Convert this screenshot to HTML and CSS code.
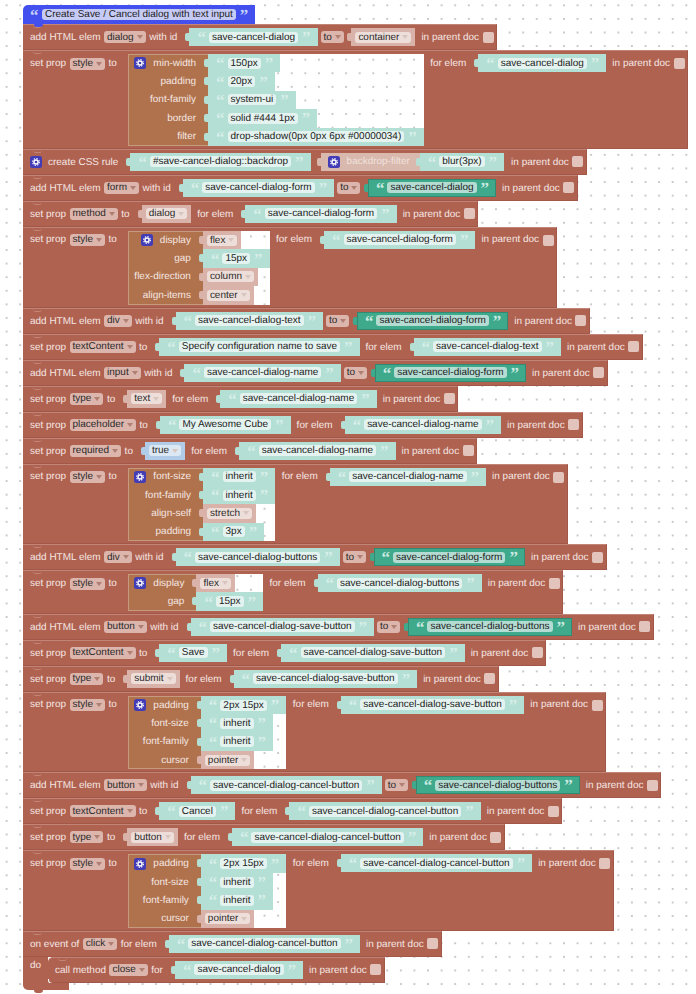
FILE: index.html
```html
<!DOCTYPE html>
<html lang="en">
<head>
  <meta charset="UTF-8">
  <title>Blocks</title>
  <link rel="stylesheet" href="styles.css">
</head>
<body>
  <svg class="defs" width="0" height="0">
    <symbol id="gear" viewBox="0 0 24 24">
      <rect width="24" height="24" rx="5" fill="#423cb6"/>
      <circle cx="12" cy="12" r="5.500" fill="#fff"/>
      <circle cx="12" cy="12" r="6.800" fill="none" stroke="#fff" stroke-width="2.200" stroke-dasharray="2.700 2.640"/>
      <circle cx="12" cy="12" r="2.600" fill="#423cb6"/>
    </symbol>
  </svg>

  <div class="stack">
    <div class="hat">
      <span class="q">“</span><span class="fld">Create Save / Cancel dialog with text input</span><span class="q">”</span>
    </div>

    <div class="row">
      <span>add HTML elem</span><span class="drop">dialog<i></i></span><span>with id</span>
      <span class="str"><span class="q">“</span><span class="fld">save-cancel-dialog</span><span class="q">”</span></span>
      <span class="drop">to<i></i></span>
      <span class="menu"><span class="drop">container<i></i></span></span>
      <span>in parent doc</span><span class="check"></span>
    </div>

    <div class="row tall">
      <span>set prop</span><span class="drop">style<i></i></span><span>to</span>
      <div class="mixin">
        <div class="keys">
          <div class="key"><svg class="gear"><use href="#gear"/></svg><span>min-width</span></div>
          <div class="key">padding</div>
          <div class="key">font-family</div>
          <div class="key">border</div>
          <div class="key">filter</div>
        </div>
        <div class="vals">
          <span class="str"><span class="q">“</span><span class="fld">150px</span><span class="q">”</span></span>
          <span class="str"><span class="q">“</span><span class="fld">20px</span><span class="q">”</span></span>
          <span class="str"><span class="q">“</span><span class="fld">system-ui</span><span class="q">”</span></span>
          <span class="str"><span class="q">“</span><span class="fld">solid #444 1px</span><span class="q">”</span></span>
          <span class="str"><span class="q">“</span><span class="fld">drop-shadow(0px 0px 6px #00000034)</span><span class="q">”</span></span>
        </div>
      </div>
      <span>for elem</span>
      <span class="str"><span class="q">“</span><span class="fld">save-cancel-dialog</span><span class="q">”</span></span>
      <span>in parent doc</span><span class="check"></span>
    </div>

    <div class="row">
      <svg class="gear"><use href="#gear"/></svg><span>create CSS rule</span>
      <span class="str"><span class="q">“</span><span class="fld">#save-cancel-dialog::backdrop</span><span class="q">”</span></span>
      <span class="css">
        <svg class="gear"><use href="#gear"/></svg><span class="css-name">backdrop-filter</span>
        <span class="str"><span class="q">“</span><span class="fld">blur(3px)</span><span class="q">”</span></span>
      </span>
      <span>in parent doc</span><span class="check"></span>
    </div>

    <div class="row">
      <span>add HTML elem</span><span class="drop">form<i></i></span><span>with id</span>
      <span class="str"><span class="q">“</span><span class="fld">save-cancel-dialog-form</span><span class="q">”</span></span>
      <span class="drop">to<i></i></span>
      <span class="str dark"><span class="q">“</span><span class="fld">save-cancel-dialog</span><span class="q">”</span></span>
      <span>in parent doc</span><span class="check"></span>
    </div>

    <div class="row">
      <span>set prop</span><span class="drop">method<i></i></span><span>to</span>
      <span class="menu"><span class="drop">dialog<i></i></span></span>
      <span>for elem</span>
      <span class="str"><span class="q">“</span><span class="fld">save-cancel-dialog-form</span><span class="q">”</span></span>
      <span>in parent doc</span><span class="check"></span>
    </div>

    <div class="row tall">
      <span>set prop</span><span class="drop">style<i></i></span><span>to</span>
      <div class="mixin">
        <div class="keys">
          <div class="key"><svg class="gear"><use href="#gear"/></svg><span>display</span></div>
          <div class="key">gap</div>
          <div class="key">flex-direction</div>
          <div class="key">align-items</div>
        </div>
        <div class="vals">
          <span class="menu"><span class="drop">flex<i></i></span></span>
          <span class="str"><span class="q">“</span><span class="fld">15px</span><span class="q">”</span></span>
          <span class="menu"><span class="drop">column<i></i></span></span>
          <span class="menu"><span class="drop">center<i></i></span></span>
        </div>
      </div>
      <span>for elem</span>
      <span class="str"><span class="q">“</span><span class="fld">save-cancel-dialog-form</span><span class="q">”</span></span>
      <span>in parent doc</span><span class="check"></span>
    </div>

    <div class="row">
      <span>add HTML elem</span><span class="drop">div<i></i></span><span>with id</span>
      <span class="str"><span class="q">“</span><span class="fld">save-cancel-dialog-text</span><span class="q">”</span></span>
      <span class="drop">to<i></i></span>
      <span class="str dark"><span class="q">“</span><span class="fld">save-cancel-dialog-form</span><span class="q">”</span></span>
      <span>in parent doc</span><span class="check"></span>
    </div>

    <div class="row">
      <span>set prop</span><span class="drop">textContent<i></i></span><span>to</span>
      <span class="str"><span class="q">“</span><span class="fld">Specify configuration name to save</span><span class="q">”</span></span>
      <span>for elem</span>
      <span class="str"><span class="q">“</span><span class="fld">save-cancel-dialog-text</span><span class="q">”</span></span>
      <span>in parent doc</span><span class="check"></span>
    </div>

    <div class="row">
      <span>add HTML elem</span><span class="drop">input<i></i></span><span>with id</span>
      <span class="str"><span class="q">“</span><span class="fld">save-cancel-dialog-name</span><span class="q">”</span></span>
      <span class="drop">to<i></i></span>
      <span class="str dark"><span class="q">“</span><span class="fld">save-cancel-dialog-form</span><span class="q">”</span></span>
      <span>in parent doc</span><span class="check"></span>
    </div>

    <div class="row">
      <span>set prop</span><span class="drop">type<i></i></span><span>to</span>
      <span class="menu"><span class="drop">text<i></i></span></span>
      <span>for elem</span>
      <span class="str"><span class="q">“</span><span class="fld">save-cancel-dialog-name</span><span class="q">”</span></span>
      <span>in parent doc</span><span class="check"></span>
    </div>

    <div class="row">
      <span>set prop</span><span class="drop">placeholder<i></i></span><span>to</span>
      <span class="str"><span class="q">“</span><span class="fld">My Awesome Cube</span><span class="q">”</span></span>
      <span>for elem</span>
      <span class="str"><span class="q">“</span><span class="fld">save-cancel-dialog-name</span><span class="q">”</span></span>
      <span>in parent doc</span><span class="check"></span>
    </div>

    <div class="row">
      <span>set prop</span><span class="drop">required<i></i></span><span>to</span>
      <span class="menu bool"><span class="drop">true<i></i></span></span>
      <span>for elem</span>
      <span class="str"><span class="q">“</span><span class="fld">save-cancel-dialog-name</span><span class="q">”</span></span>
      <span>in parent doc</span><span class="check"></span>
    </div>

    <div class="row tall">
      <span>set prop</span><span class="drop">style<i></i></span><span>to</span>
      <div class="mixin">
        <div class="keys">
          <div class="key"><svg class="gear"><use href="#gear"/></svg><span>font-size</span></div>
          <div class="key">font-family</div>
          <div class="key">align-self</div>
          <div class="key">padding</div>
        </div>
        <div class="vals">
          <span class="str"><span class="q">“</span><span class="fld">inherit</span><span class="q">”</span></span>
          <span class="str"><span class="q">“</span><span class="fld">inherit</span><span class="q">”</span></span>
          <span class="menu"><span class="drop">stretch<i></i></span></span>
          <span class="str"><span class="q">“</span><span class="fld">3px</span><span class="q">”</span></span>
        </div>
      </div>
      <span>for elem</span>
      <span class="str"><span class="q">“</span><span class="fld">save-cancel-dialog-name</span><span class="q">”</span></span>
      <span>in parent doc</span><span class="check"></span>
    </div>

    <div class="row">
      <span>add HTML elem</span><span class="drop">div<i></i></span><span>with id</span>
      <span class="str"><span class="q">“</span><span class="fld">save-cancel-dialog-buttons</span><span class="q">”</span></span>
      <span class="drop">to<i></i></span>
      <span class="str dark"><span class="q">“</span><span class="fld">save-cancel-dialog-form</span><span class="q">”</span></span>
      <span>in parent doc</span><span class="check"></span>
    </div>

    <div class="row tall">
      <span>set prop</span><span class="drop">style<i></i></span><span>to</span>
      <div class="mixin">
        <div class="keys">
          <div class="key"><svg class="gear"><use href="#gear"/></svg><span>display</span></div>
          <div class="key">gap</div>
        </div>
        <div class="vals">
          <span class="menu"><span class="drop">flex<i></i></span></span>
          <span class="str"><span class="q">“</span><span class="fld">15px</span><span class="q">”</span></span>
        </div>
      </div>
      <span>for elem</span>
      <span class="str"><span class="q">“</span><span class="fld">save-cancel-dialog-buttons</span><span class="q">”</span></span>
      <span>in parent doc</span><span class="check"></span>
    </div>

    <div class="row">
      <span>add HTML elem</span><span class="drop">button<i></i></span><span>with id</span>
      <span class="str"><span class="q">“</span><span class="fld">save-cancel-dialog-save-button</span><span class="q">”</span></span>
      <span class="drop">to<i></i></span>
      <span class="str dark"><span class="q">“</span><span class="fld">save-cancel-dialog-buttons</span><span class="q">”</span></span>
      <span>in parent doc</span><span class="check"></span>
    </div>

    <div class="row">
      <span>set prop</span><span class="drop">textContent<i></i></span><span>to</span>
      <span class="str"><span class="q">“</span><span class="fld">Save</span><span class="q">”</span></span>
      <span>for elem</span>
      <span class="str"><span class="q">“</span><span class="fld">save-cancel-dialog-save-button</span><span class="q">”</span></span>
      <span>in parent doc</span><span class="check"></span>
    </div>

    <div class="row">
      <span>set prop</span><span class="drop">type<i></i></span><span>to</span>
      <span class="menu"><span class="drop">submit<i></i></span></span>
      <span>for elem</span>
      <span class="str"><span class="q">“</span><span class="fld">save-cancel-dialog-save-button</span><span class="q">”</span></span>
      <span>in parent doc</span><span class="check"></span>
    </div>

    <div class="row tall">
      <span>set prop</span><span class="drop">style<i></i></span><span>to</span>
      <div class="mixin">
        <div class="keys">
          <div class="key"><svg class="gear"><use href="#gear"/></svg><span>padding</span></div>
          <div class="key">font-size</div>
          <div class="key">font-family</div>
          <div class="key">cursor</div>
        </div>
        <div class="vals">
          <span class="str"><span class="q">“</span><span class="fld">2px 15px</span><span class="q">”</span></span>
          <span class="str"><span class="q">“</span><span class="fld">inherit</span><span class="q">”</span></span>
          <span class="str"><span class="q">“</span><span class="fld">inherit</span><span class="q">”</span></span>
          <span class="menu"><span class="drop">pointer<i></i></span></span>
        </div>
      </div>
      <span>for elem</span>
      <span class="str"><span class="q">“</span><span class="fld">save-cancel-dialog-save-button</span><span class="q">”</span></span>
      <span>in parent doc</span><span class="check"></span>
    </div>

    <div class="row">
      <span>add HTML elem</span><span class="drop">button<i></i></span><span>with id</span>
      <span class="str"><span class="q">“</span><span class="fld">save-cancel-dialog-cancel-button</span><span class="q">”</span></span>
      <span class="drop">to<i></i></span>
      <span class="str dark"><span class="q">“</span><span class="fld">save-cancel-dialog-buttons</span><span class="q">”</span></span>
      <span>in parent doc</span><span class="check"></span>
    </div>

    <div class="row">
      <span>set prop</span><span class="drop">textContent<i></i></span><span>to</span>
      <span class="str"><span class="q">“</span><span class="fld">Cancel</span><span class="q">”</span></span>
      <span>for elem</span>
      <span class="str"><span class="q">“</span><span class="fld">save-cancel-dialog-cancel-button</span><span class="q">”</span></span>
      <span>in parent doc</span><span class="check"></span>
    </div>

    <div class="row">
      <span>set prop</span><span class="drop">type<i></i></span><span>to</span>
      <span class="menu"><span class="drop">button<i></i></span></span>
      <span>for elem</span>
      <span class="str"><span class="q">“</span><span class="fld">save-cancel-dialog-cancel-button</span><span class="q">”</span></span>
      <span>in parent doc</span><span class="check"></span>
    </div>

    <div class="row tall">
      <span>set prop</span><span class="drop">style<i></i></span><span>to</span>
      <div class="mixin">
        <div class="keys">
          <div class="key"><svg class="gear"><use href="#gear"/></svg><span>padding</span></div>
          <div class="key">font-size</div>
          <div class="key">font-family</div>
          <div class="key">cursor</div>
        </div>
        <div class="vals">
          <span class="str"><span class="q">“</span><span class="fld">2px 15px</span><span class="q">”</span></span>
          <span class="str"><span class="q">“</span><span class="fld">inherit</span><span class="q">”</span></span>
          <span class="str"><span class="q">“</span><span class="fld">inherit</span><span class="q">”</span></span>
          <span class="menu"><span class="drop">pointer<i></i></span></span>
        </div>
      </div>
      <span>for elem</span>
      <span class="str"><span class="q">“</span><span class="fld">save-cancel-dialog-cancel-button</span><span class="q">”</span></span>
      <span>in parent doc</span><span class="check"></span>
    </div>

    <div class="row">
      <span>on event of</span><span class="drop">click<i></i></span><span>for elem</span>
      <span class="str"><span class="q">“</span><span class="fld">save-cancel-dialog-cancel-button</span><span class="q">”</span></span>
      <span>in parent doc</span><span class="check"></span>
    </div>
    <div class="do">
      <div class="do-label">do</div>
      <div class="row nested">
        <span>call method</span><span class="drop">close<i></i></span><span>for</span>
        <span class="str"><span class="q">“</span><span class="fld">save-cancel-dialog</span><span class="q">”</span></span>
        <span>in parent doc</span><span class="check"></span>
      </div>
    </div>
    <div class="foot"></div>
  </div>
</body>
</html>
```

FILE: styles.css
```css
html, body {
  margin: 0;
  height: 100%;
}
body {
  width: 696px;
  height: 994px;
  overflow: hidden;
  background: #fff radial-gradient(circle, #c9c9c9 0.8px, transparent 1.1px) -0.200px -1.500px / 13.6px 13.6px;
  font-family: "Liberation Sans", Arial, sans-serif;
  font-size: 9.97px;
  text-rendering: geometricPrecision;
  color: #f4e6e2;
}
.defs {
  position: absolute;
}
.stack {
  display: flex;
  flex-direction: column;
  align-items: flex-start;
  padding: 5px 0 0 23px;
}

/* blue comment hat */
.hat {
  position: relative;
  z-index: 2;
  display: flex;
  align-items: center;
  height: 19px;
  padding: 0 8px 0 7px;
  background: #4450ee;
  border-radius: 5px 0 0 0;
  color: #222;
}
.hat .fld {
  background: #c6cbf6;
  margin: 0 4px 0 4.500px;
}
.hat .q {
  color: #c6d2f8;
}
.hat::after {
  content: "";
  position: absolute;
  left: 11px;
  bottom: -3px;
  width: 9px;
  height: 3px;
  background: #4450ee;
  border-radius: 0 0 5px 5px;
}

/* statement row */
.row {
  position: relative;
  display: flex;
  align-items: center;
  gap: 3.500px;
  box-sizing: border-box;
  height: 26px;
  padding: 0 2.500px 0 7px;
  background: #b06251;
  border-top: 1px solid #c28476;
  border-right: 1px solid #a25748;
  border-bottom: 1px solid #a25748;
  white-space: nowrap;
}
.row::before {
  content: "";
  position: absolute;
  left: 10px;
  top: 0;
  width: 9px;
  height: 3px;
  box-sizing: border-box;
  border-bottom: 1px solid #c28476;
  border-radius: 0 0 5px 5px;
}
.row > span {
  margin-top: 1px;
}
.row > .drop,
.row > .check {
  margin-top: 0;
}
.row > .str,
.row > .menu,
.row > .css {
  height: 18px;
  margin-top: 0;
  margin-right: 2.500px;
}
.row > .str + .drop {
  margin-left: -3px;
}
.row > .drop + .str,
.row > .drop + .menu {
  margin-left: 4px;
}
.row.tall {
  align-items: flex-start;
  height: auto;
  padding-top: 3px;
  padding-bottom: 2px;
}
.tall > span {
  margin-top: 3.500px;
  line-height: 12px;
}
.tall > .drop {
  margin-top: 3.500px;
}
.tall > .str {
  margin-top: 0;
}
.tall > .check {
  margin-top: 4px;
}

.drop {
  display: inline-flex;
  align-items: center;
  gap: 3px;
  height: 12px;
  padding: 0 3px;
  background: #dcb5ac;
  border-radius: 3px;
  color: #2b2b2b;
}
.drop i {
  width: 0;
  height: 0;
  border-left: 3px solid transparent;
  border-right: 3px solid transparent;
  border-top: 4px solid #b07f74;
}
.check {
  width: 11px;
  height: 11px;
  background: #e2c4bd;
  border-radius: 2px;
}

/* text value block */
.str {
  position: relative;
  display: inline-flex;
  align-items: center;
  box-sizing: border-box;
  height: 18.400px;
  margin-left: 8.500px;
  padding: 0 8px;
  background: #b3dfd4;
  color: #222;
}
.str::before,
.menu::before {
  content: "";
  position: absolute;
  left: -4px;
  top: 5px;
  width: 4px;
  height: 8px;
  background: inherit;
  border-radius: 2px 0 0 2px;
}
.fld {
  height: 11px;
  line-height: 11px;
  margin: 0 4px;
  padding: 0 3px;
  background: #e4f3ef;
  border-radius: 3px;
}
.q {
  width: 7.500px;
  height: 8px;
  margin-top: -4px;
  font-family: "Liberation Serif", serif;
  font-size: 17px;
  font-weight: bold;
  line-height: 13px;
  color: #d7eee8;
}
.str.dark {
  background: #3fa98c;
  outline: 1px solid #338a72;
  outline-offset: -1px;
}
.dark .fld {
  background: #b4dcd2;
}
.dark .q {
  color: #c9e9e0;
}

/* dropdown value block */
.menu {
  position: relative;
  display: inline-flex;
  align-items: center;
  box-sizing: border-box;
  height: 18.400px;
  margin-left: 8.500px;
  padding: 0 4px;
  background: #d9b2a9;
}
.menu .drop {
  height: 11px;
  background: #eeded9;
}
.menu .drop i {
  border-top-color: #d9c5bf;
}
.bool {
  background: #b0cce8;
}
.bool .drop {
  background: #dbe8f4;
}

/* style object block */
.mixin {
  display: flex;
  margin: 0 3px 0 8px;
  background: #fff radial-gradient(circle, #c9c9c9 0.8px, transparent 1.1px) fixed -0.200px -1.500px / 13.6px 13.6px;
}
.keys {
  padding: 0 12px 0 6px;
  background: #b0724d;
  box-shadow: inset 1px 1px 0 #c59a7e, inset 0 -1px 0 #c59a7e;
}
.key {
  display: flex;
  align-items: center;
  justify-content: flex-end;
  gap: 7px;
  height: 18.400px;
}
.gear {
  flex: none;
  width: 12px;
  height: 12px;
}
.row > .gear {
  margin-right: 2.500px;
}
.vals {
  display: flex;
  flex-direction: column;
  align-items: flex-start;
}
.vals .str,
.vals .menu {
  margin-left: 0;
}

/* css rule block */
.css {
  position: relative;
  display: inline-flex;
  align-items: center;
  gap: 7px;
  height: 18.400px;
  margin-left: 4px;
  padding-left: 7px;
  background: #d9b9ad;
}
.row > .css {
  margin-right: 3.500px;
}
.css::before {
  content: "";
  position: absolute;
  left: -4px;
  top: 5px;
  width: 4px;
  height: 8px;
  background: #d9b9ad;
  border-radius: 2px 0 0 2px;
}
.css-name {
  color: #efe2dd;
}
.css .str {
  height: 18px;
  margin-left: 3px;
}

/* event block */
.do {
  position: relative;
  display: flex;
}
.do-label {
  box-sizing: border-box;
  width: 25px;
  padding: 3px 0 0 7px;
  line-height: 12px;
  background: #b06251;
}
.row.nested {
  border-radius: 5px 0 0 0;
}
.do::after {
  content: "";
  position: absolute;
  left: 25px;
  bottom: -2px;
  width: 14px;
  height: 6px;
  box-sizing: border-box;
  border-left: 1px solid #fff;
  border-bottom: 2px solid #fff;
  border-radius: 0 0 0 5px;
}
.foot {
  position: relative;
  width: 46px;
  height: 7px;
  background: #b06251;
  border-radius: 0 0 0 5px;
}
.foot::after {
  content: "";
  position: absolute;
  left: 11px;
  bottom: -3px;
  width: 9px;
  height: 3px;
  background: #b06251;
  border-radius: 0 0 5px 5px;
}
```
